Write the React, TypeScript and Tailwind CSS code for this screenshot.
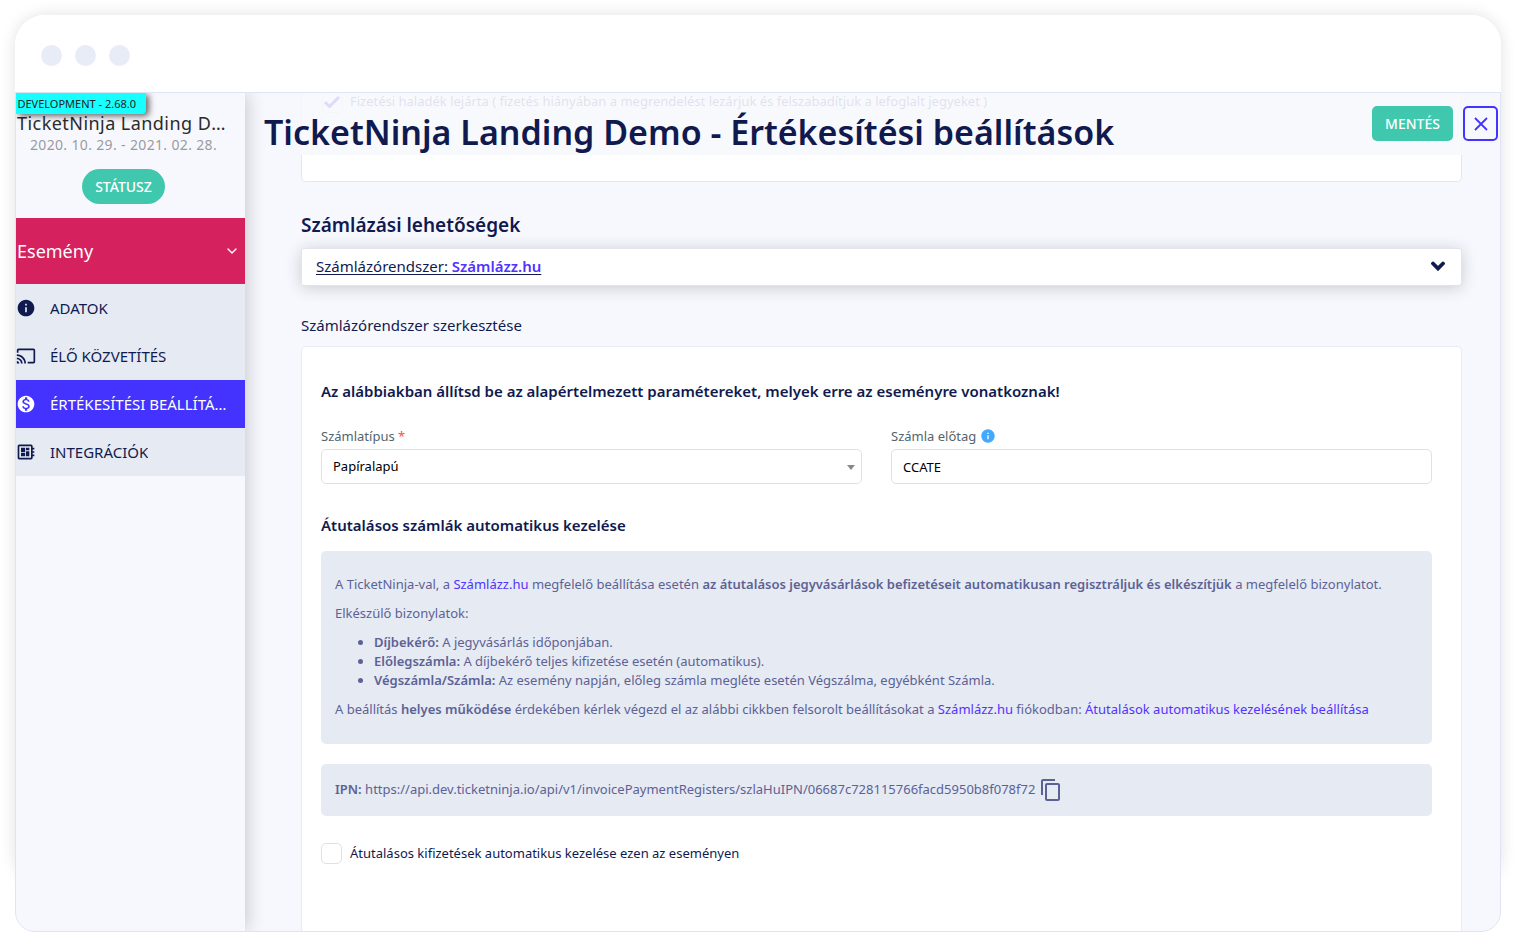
import { useState } from 'react';
import type { ReactNode } from 'react';
import { FiChevronDown } from 'react-icons/fi';
import { MdCast, MdContentCopy, MdDeveloperBoard, MdInfo, MdMonetizationOn } from 'react-icons/md';

const IPN_URL =
  'https://api.dev.ticketninja.io/api/v1/invoicePaymentRegisters/szlaHuIPN/06687c728115766facd5950b8f078f72';

const menuItems = [
  { label: 'ADATOK', icon: MdInfo },
  { label: 'ÉLŐ KÖZVETÍTÉS', icon: MdCast },
  { label: 'ÉRTÉKESÍTÉSI BEÁLLÍTÁSOK', icon: MdMonetizationOn, active: true },
  { label: 'INTEGRÁCIÓK', icon: MdDeveloperBoard },
];

function Sidebar() {
  return (
    <aside className="relative z-20 flex w-[229px] shrink-0 flex-col bg-[#f7f8fd] shadow-[4px_0_16px_rgba(0,0,0,0.16)]">
      {/* Environment badge */}
      <div className="absolute top-0 left-0 flex h-[21px] w-[130px] justify-end rounded-br bg-[#18ffff] pr-[10px] text-[11px] leading-[21px] whitespace-nowrap text-[#222] shadow-[3px_2px_6px_rgba(0,0,0,0.6)]">
        DEVELOPMENT - 2.68.0
      </div>

      <div className="flex h-[125px] flex-col items-center pt-[18px]">
        <div className="w-full truncate pr-3 pl-px text-lg leading-6 tracking-wide text-[#2b2b2b]">
          TicketNinja Landing Demo
        </div>
        <div className="mr-[14px] text-sm leading-5 tracking-wide whitespace-nowrap text-[#9b9b9f]">
          2020. 10. 29. - 2021. 02. 28.
        </div>
        <button className="mt-[14px] mr-[14px] h-[35px] rounded-full bg-[#40c8ae] px-[13px] text-sm font-medium text-white">
          STÁTUSZ
        </button>
      </div>

      <button className="flex h-[66px] items-center justify-between bg-[#d5215d] pr-[5px] pl-px text-left text-lg text-white">
        Esemény
        <FiChevronDown className="h-4 w-4" />
      </button>

      <nav className="flex flex-col bg-[#e6eaf3]">
        {menuItems.map(({ label, icon: Icon, active }) => (
          <a
            key={label}
            href="#"
            className={`flex h-12 items-center gap-[14px] pr-[15px] text-[15px] ${
              active ? 'bg-[#4433ff] text-white' : 'text-[#101a4f]'
            }`}
          >
            <Icon className="h-5 w-5 shrink-0" />
            <span className="truncate">{label}</span>
          </a>
        ))}
      </nav>
    </aside>
  );
}

function PageHeader() {
  return (
    <header className="absolute inset-x-0 top-0 z-10 flex h-[62px] items-start justify-between bg-[#f7f8fd]/85 pr-0.5 pl-[19px]">
      <h1 className="pt-[17px] text-[34px] leading-[44px] font-semibold text-[#101a4f]">
        TicketNinja Landing Demo - Értékesítési beállítások
      </h1>
      <div className="flex gap-[10px] pt-[13px]">
        <button className="h-[35px] rounded-[5px] bg-[#40c8ae] px-[13px] text-sm font-medium text-white">
          MENTÉS
        </button>
        <button
          aria-label="Bezárás"
          className="flex h-[35px] w-[35px] items-center justify-center rounded-[5px] border-2 border-[#4433ff] text-[#4433ff]"
        >
          <svg viewBox="0 0 14 14" className="h-[14px] w-[14px]" fill="none" stroke="currentColor" strokeWidth="1.8">
            <path d="M1 1l12 12M13 1L1 13" />
          </svg>
        </button>
      </div>
    </header>
  );
}

function TextLink({ children }: { children: ReactNode }) {
  return (
    <a href="#" className="text-[#5233ff]">
      {children}
    </a>
  );
}

function TransferInfo() {
  return (
    <div className="mt-[15px] rounded-[5px] bg-[#e6eaf3] px-[14px] pt-6 pb-[25px] text-[13px] leading-[19px] text-[#5c6295] [&_b]:font-semibold">
      <p>
        A TicketNinja-val, a <TextLink>Számlázz.hu</TextLink> megfelelő beállítása esetén{' '}
        <b>az átutalásos jegyvásárlások befizetéseit automatikusan regisztráljuk és elkészítjük</b> a megfelelő
        bizonylatot.
      </p>
      <p className="mt-[10px]">Elkészülő bizonylatok:</p>
      <ul className="mt-[10px] list-disc pl-[39px]">
        <li>
          <b>Díjbekérő:</b> A jegyvásárlás időponjában.
        </li>
        <li>
          <b>Előlegszámla:</b> A díjbekérő teljes kifizetése esetén (automatikus).
        </li>
        <li>
          <b>Végszámla/Számla:</b> Az esemény napján, előleg számla megléte esetén Végszálma, egyébként Számla.
        </li>
      </ul>
      <p className="mt-[10px]">
        A beállítás <b>helyes működése</b> érdekében kérlek végezd el az alábbi cikkben felsorolt beállításokat a{' '}
        <TextLink>Számlázz.hu</TextLink> fiókodban: <TextLink>Átutalások automatikus kezelésének beállítása</TextLink>
      </p>
    </div>
  );
}

function InvoiceSettings() {
  const [prefix, setPrefix] = useState('CCATE');
  const [autoTransfer, setAutoTransfer] = useState(false);

  return (
    <div className="mt-[10px] flex-1 rounded-t-[5px] border border-b-0 border-[#e9ebf1] bg-white pt-[33px] pr-[29px] pl-[19px]">
      <h3 className="text-[15px] leading-[22px] font-semibold text-[#101a4f]">
        Az alábbiakban állítsd be az alapértelmezett paramétereket, melyek erre az eseményre vonatkoznak!
      </h3>

      <div className="mt-6 grid grid-cols-2 gap-[29px] text-[13px]">
        <div>
          <label htmlFor="invoice-type" className="block leading-5 text-[#52656f]">
            Számlatípus <span className="text-[#ff4a4a]">*</span>
          </label>
          <div className="relative mt-[3px]">
            <select
              id="invoice-type"
              className="h-[35px] w-full appearance-none rounded-[5px] border border-[#dde1ee] bg-white px-[11px] text-black"
            >
              <option>Papíralapú</option>
              <option>Elektronikus</option>
            </select>
            <svg viewBox="0 0 8 5" className="pointer-events-none absolute top-4 right-[7px] h-[5px] w-2 fill-[#888]">
              <path d="M0 0h8L4 5z" />
            </svg>
          </div>
        </div>
        <div>
          <label htmlFor="invoice-prefix" className="flex items-center gap-1 leading-5 text-[#52656f]">
            Számla előtag
            <MdInfo className="h-4 w-4 text-[#42a9ff]" />
          </label>
          <input
            id="invoice-prefix"
            type="text"
            value={prefix}
            onChange={(e) => setPrefix(e.target.value)}
            className="mt-[3px] h-[35px] w-full rounded-[5px] border border-[#dde1ee] bg-white px-[11px] text-black"
          />
        </div>
      </div>

      <h3 className="mt-[30px] text-[15px] leading-[22px] font-semibold text-[#101a4f]">
        Átutalásos számlák automatikus kezelése
      </h3>
      <TransferInfo />

      <div className="mt-5 flex h-[52px] items-center gap-1 rounded-[5px] bg-[#e6eaf3] px-[14px] text-[13px] text-[#5c6295]">
        <span>
          <b className="font-semibold">IPN:</b> {IPN_URL}
        </span>
        <button aria-label="Másolás">
          <MdContentCopy className="h-6 w-6" />
        </button>
      </div>

      <label className="mt-[27px] flex items-center gap-2 text-[13px] text-[#101a4f]">
        <input
          type="checkbox"
          checked={autoTransfer}
          onChange={(e) => setAutoTransfer(e.target.checked)}
          className="h-[21px] w-[21px] appearance-none rounded-[5px] border border-[#dde1ee] bg-white checked:bg-[#4433ff]"
        />
        Átutalásos kifizetések automatikus kezelése ezen az eseményen
      </label>
    </div>
  );
}

function Content() {
  return (
    <div className="flex min-h-0 flex-1 flex-col overflow-hidden pr-[38px] pl-14">
      {/* End of the previous card, scrolled under the header */}
      <div className="h-[89px] shrink-0 rounded-b-[5px] border border-t-0 border-[#e4e6ec] bg-white pl-5 text-[13px] text-[#5c6295]">
        <label className="flex h-[18px] items-center gap-[7px]">
          <span className="relative h-[21px] w-[21px]">
            <input
              type="checkbox"
              defaultChecked
              className="h-[21px] w-[21px] appearance-none rounded-[5px] border border-[#dde1ee] bg-white"
            />
            <svg
              viewBox="0 0 16 12"
              className="absolute top-1 left-0.5 h-3 w-4"
              fill="none"
              stroke="#4433ff"
              strokeWidth="3"
            >
              <path d="M1 6l4.500 4.500L15 1" />
            </svg>
          </span>
          Fizetési haladék lejárta ( fizetés hiányában a megrendelést lezárjuk és felszabadítjuk a lefoglalt jegyeket )
        </label>
      </div>

      <h2 className="mt-[29px] text-[19px] leading-7 font-semibold text-[#101a4f]">Számlázási lehetőségek</h2>
      <button className="mt-[9px] flex h-[38px] shrink-0 items-center justify-between rounded-[3px] border border-[#e1e4ee] bg-white pr-4 pb-0.5 pl-[14px] text-[15px] text-[#101a4f] shadow-[0_2px_16px_rgba(0,0,0,0.18)]">
        <span className="underline underline-offset-2">
          Számlázórendszer: <b className="font-semibold text-[#5233ff]">Számlázz.hu</b>
        </span>
        <svg
          viewBox="0 0 14 10"
          className="h-[10px] w-[14px]"
          fill="none"
          stroke="currentColor"
          strokeWidth="3.8"
          strokeLinecap="round"
        >
          <path d="M2 2.500l5 5 5-5" />
        </svg>
      </button>

      <h3 className="mt-7 text-[15px] leading-[22px] text-[#101a4f]">Számlázórendszer szerkesztése</h3>
      <InvoiceSettings />
    </div>
  );
}

export default function App() {
  return (
    <div className="h-screen overflow-hidden bg-white px-[15px] pt-[15px] font-['Noto_Sans','Open_Sans',sans-serif]">
      <div className="relative flex h-full flex-col">
        <div className="absolute inset-x-0 top-0 bottom-12 rounded-[30px] shadow-[0_0_16px_rgba(0,0,0,0.12)]" />

        {/* Window bar */}
        <div className="relative flex h-[77px] shrink-0 items-center gap-[13px] rounded-t-[30px] bg-white pt-1 pl-[26px]">
          <span className="h-[21px] w-[21px] rounded-full bg-[#e8ecf6]" />
          <span className="h-[21px] w-[21px] rounded-full bg-[#e8ecf6]" />
          <span className="h-[21px] w-[21px] rounded-full bg-[#e8ecf6]" />
        </div>

        <div className="relative flex min-h-0 flex-1 overflow-hidden rounded-b-[20px] border border-[#dfe4f5] bg-[#f7f8fd]">
          <Sidebar />
          <main className="relative flex min-w-0 flex-1 flex-col">
            <PageHeader />
            <Content />
          </main>
        </div>
      </div>
    </div>
  );
}
